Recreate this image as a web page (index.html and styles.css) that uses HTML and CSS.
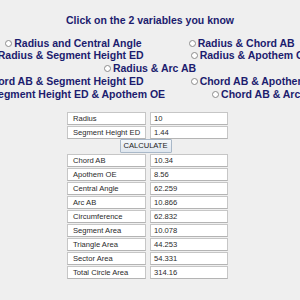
FILE: index.html
```html
<!DOCTYPE html>
<html lang="en">
<head>
    <meta charset="UTF-8">
    <title>Segment of a Circle Calculator</title>
    <link rel="stylesheet" href="styles.css">
</head>
<body>
    <h1 class="prompt">Click on the 2 variables you know</h1>

    <!-- pairs of known variables -->
    <div class="choices">
        <div class="choice-row">
            <label class="choice"><input type="radio" name="known">Radius and Central Angle</label>
            <label class="choice"><input type="radio" name="known">Radius &amp; Chord AB</label>
        </div>
        <div class="choice-row">
            <label class="choice"><input type="radio" name="known" checked>Radius &amp; Segment Height ED</label>
            <label class="choice"><input type="radio" name="known">Radius &amp; Apothem OE</label>
        </div>
        <div class="choice-row">
            <label class="choice"><input type="radio" name="known">Radius &amp; Arc AB</label>
        </div>
        <div class="choice-row">
            <label class="choice"><input type="radio" name="known">Chord AB &amp; Segment Height ED</label>
            <label class="choice"><input type="radio" name="known">Chord AB &amp; Apothem OE</label>
        </div>
        <div class="choice-row">
            <label class="choice"><input type="radio" name="known">Segment Height ED &amp; Apothem OE</label>
            <label class="choice"><input type="radio" name="known">Chord AB &amp; Arc AB</label>
        </div>
    </div>

    <!-- inputs and results -->
    <div class="calc">
        <div class="cell label">Radius</div>
        <div class="cell value">10</div>
        <div class="cell label">Segment Height ED</div>
        <div class="cell value">1.44</div>

        <div class="calc-action">
            <button class="calc-button" type="button">CALCULATE</button>
        </div>

        <div class="cell label">Chord AB</div>
        <div class="cell value">10.34</div>
        <div class="cell label">Apothem OE</div>
        <div class="cell value">8.56</div>
        <div class="cell label">Central Angle</div>
        <div class="cell value">62.259</div>
        <div class="cell label">Arc AB</div>
        <div class="cell value">10.866</div>
        <div class="cell label">Circumference</div>
        <div class="cell value">62.832</div>
        <div class="cell label">Segment Area</div>
        <div class="cell value">10.078</div>
        <div class="cell label">Triangle Area</div>
        <div class="cell value">44.253</div>
        <div class="cell label">Sector Area</div>
        <div class="cell value">54.331</div>
        <div class="cell label">Total Circle Area</div>
        <div class="cell value">314.16</div>
    </div>
</body>
</html>
```

FILE: styles.css
```css
html, body {
    margin: 0;
    padding: 0;
    background: #efefef;
    overflow: hidden;
}
body {
    font-family: 'Liberation Sans', Arial, sans-serif;
    color: #1c1c6e;
}
.prompt {
    margin: 13.7px 0 0 0;
    font-size: 10.5px;
    line-height: 13px;
    font-weight: 700;
    text-align: center;
}
.choices {
    margin-top: 10px;
    overflow: hidden;
}
.choice-row {
    display: flex;
    justify-content: center;
    gap: 47px;
    height: 12.75px;
    white-space: nowrap;
}
.choice {
    display: inline-flex;
    align-items: center;
    font-size: 10.5px;
    line-height: 12.75px;
    font-weight: 700;
}
.choice input {
    appearance: none;
    -webkit-appearance: none;
    width: 7px;
    height: 7px;
    margin: 0 2px 0 0;
    border: 1px solid #8c8c8c;
    border-radius: 50%;
    background: #fff;
    flex-shrink: 0;
}
.calc {
    display: grid;
    grid-template-columns: 79px 78px;
    grid-auto-rows: 13px;
    column-gap: 4px;
    row-gap: 1px;
    margin: 11.3px 0 0 67px;
    width: 161px;
    font-size: 7.6px;
    color: #2a2a2a;
}
.cell {
    box-sizing: border-box;
    background: #fff;
    border: 1px solid #c6c6c6;
    border-bottom-color: #b4b4b4;
    line-height: 11px;
    white-space: nowrap;
    overflow: hidden;
}
.label {
    padding-left: 5px;
}
.value {
    padding-left: 3px;
}
.calc-action {
    grid-column: 1 / 3;
    display: flex;
    justify-content: center;
}
.calc-button {
    box-sizing: border-box;
    width: 52px;
    height: 14px;
    margin: -1px 4px 0 0;
    padding: 0;
    border: 1px solid #a9b8c8;
    border-radius: 1px;
    background: linear-gradient(#f4f7fa, #dfe6ee);
    font-family: 'Liberation Sans', Arial, sans-serif;
    font-size: 7.6px;
    color: #222;
}
```
